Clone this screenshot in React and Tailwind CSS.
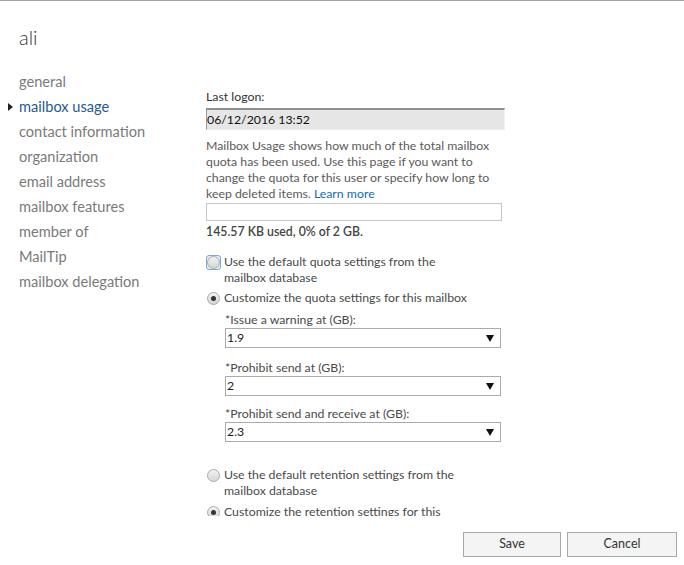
import React from "react";

const nav = [
  "general",
  "mailbox usage",
  "contact information",
  "organization",
  "email address",
  "mailbox features",
  "member of",
  "MailTip",
  "mailbox delegation",
];

function Radio({ checked, focused }) {
  return (
    <span
      className={
        "relative mt-[0.5px] flex h-[15px] w-[15px] shrink-0 items-center justify-center rounded-[3px] " +
        (focused ? "border border-[#7fa6d6] bg-[#e8f0fa]" : "border border-transparent")
      }
    >
      <span className="flex h-[13px] w-[13px] items-center justify-center rounded-full border border-[#a9a9a9] bg-gradient-to-b from-[#f2f2f2] to-[#d6d6d6]">
        {checked && <span className="h-[5px] w-[5px] rounded-full bg-[#333]" />}
      </span>
    </span>
  );
}

function RadioRow({ checked, focused, children }) {
  return (
    <div className="flex items-start gap-[3px]">
      <Radio checked={checked} focused={focused} />
      <div className="whitespace-nowrap leading-[16px] text-[#4a4a4a]">{children}</div>
    </div>
  );
}

function Select({ value }) {
  return (
    <div className="flex h-[20px] w-[276px] items-center justify-between border border-[#ababab] bg-white pl-[1px] pr-[6px] text-[#222]">
      <span className="leading-[16px]">{value}</span>
      <svg width="8" height="7" viewBox="0 0 8 7">
        <path d="M0 0 H8 L4 7 Z" fill="#111" />
      </svg>
    </div>
  );
}

export default function App() {
  return (
    <div
      className="relative h-[565px] w-[684px] overflow-hidden border-t border-[#a3a3a3] bg-white text-[12.3px]"
      style={{ fontFamily: 'Lato, "Noto Sans", sans-serif' }}
    >
      <div className="pl-[19px] pt-[22px] text-[20px] font-light leading-[28px] text-[#333]">ali</div>
      <div className="mt-[19px] flex">
        <div className="-mt-[1px] w-[206px] shrink-0 pl-[19px]">
          {nav.map((n, i) => (
            <div
              key={n}
              className={
                "relative h-[25px] whitespace-nowrap text-[14.6px] leading-[25px] " +
                (i === 1 ? "text-[#1d5a96]" : "text-[#7a7a7a]")
              }
            >
              {i === 1 && (
                <svg className="absolute left-[-11px] top-[9px]" width="5" height="8" viewBox="0 0 5 8">
                  <path d="M0 0 L5 4 L0 8 Z" fill="#222" />
                </svg>
              )}
              {n}
            </div>
          ))}
        </div>
        <div className="h-[446px] overflow-hidden pt-[18px]">
          <div className="leading-[17px] text-[#333]">Last logon:</div>
          <div className="mt-[3px] flex h-[22px] w-[299px] items-center border-t-2 border-l border-r border-b border-t-[#8f8f8f] border-l-[#9a9a9a] border-r-[#f0f0f0] border-b-[#f0f0f0] bg-[#e6e6e6] text-[#111]">
            <span className="leading-[16px]">06/12/2016 13:52</span>
          </div>
          <p className="mt-[8px] whitespace-nowrap leading-[16px] text-[#5a5a5a]">
            Mailbox Usage shows how much of the total mailbox
            <br />
            quota has been used. Use this page if you want to
            <br />
            change the quota for this user or specify how long to
            <br />
            keep deleted items. <span className="text-[#0c6cc4]">Learn more</span>
          </p>
          <div className="mt-[1px] h-[18px] w-[296px] border border-[#c8c8c8] bg-white" />
          <div className="mt-[3px] font-semibold leading-[16px] text-[#444]">145.57 KB used, 0% of 2 GB.</div>
          <div className="mt-[14px]">
            <RadioRow focused>
              Use the default quota settings from the
              <br />
              mailbox database
            </RadioRow>
          </div>
          <div className="mt-[4px]">
            <RadioRow checked>Customize the quota settings for this mailbox</RadioRow>
          </div>
          <div className="pl-[19px]">
            <div className="mt-[6px] leading-[16px] text-[#4a4a4a]">*Issue a warning at (GB):</div>
            <Select value="1.9" />
            <div className="mt-[12px] leading-[16px] text-[#4a4a4a]">*Prohibit send at (GB):</div>
            <Select value="2" />
            <div className="mt-[10px] leading-[16px] text-[#4a4a4a]">*Prohibit send and receive at (GB):</div>
            <Select value="2.3" />
          </div>
          <div className="mt-[25px]">
            <RadioRow>
              Use the default retention settings from the
              <br />
              mailbox database
            </RadioRow>
          </div>
          <div className="mt-[5px]">
            <RadioRow checked>
              Customize the retention settings for this
              <br />
              mailbox
            </RadioRow>
          </div>
        </div>
      </div>
      <div className="absolute bottom-[8px] right-[7px] flex gap-[6px]">
        <button className="h-[25px] w-[98px] border border-[#a2aaaa] bg-[#f4f4f4] text-[12.5px] text-[#333]">Save</button>
        <button className="h-[25px] w-[110px] border border-[#a2aaaa] bg-[#f4f4f4] text-[12.5px] text-[#333]">Cancel</button>
      </div>
    </div>
  );
}
